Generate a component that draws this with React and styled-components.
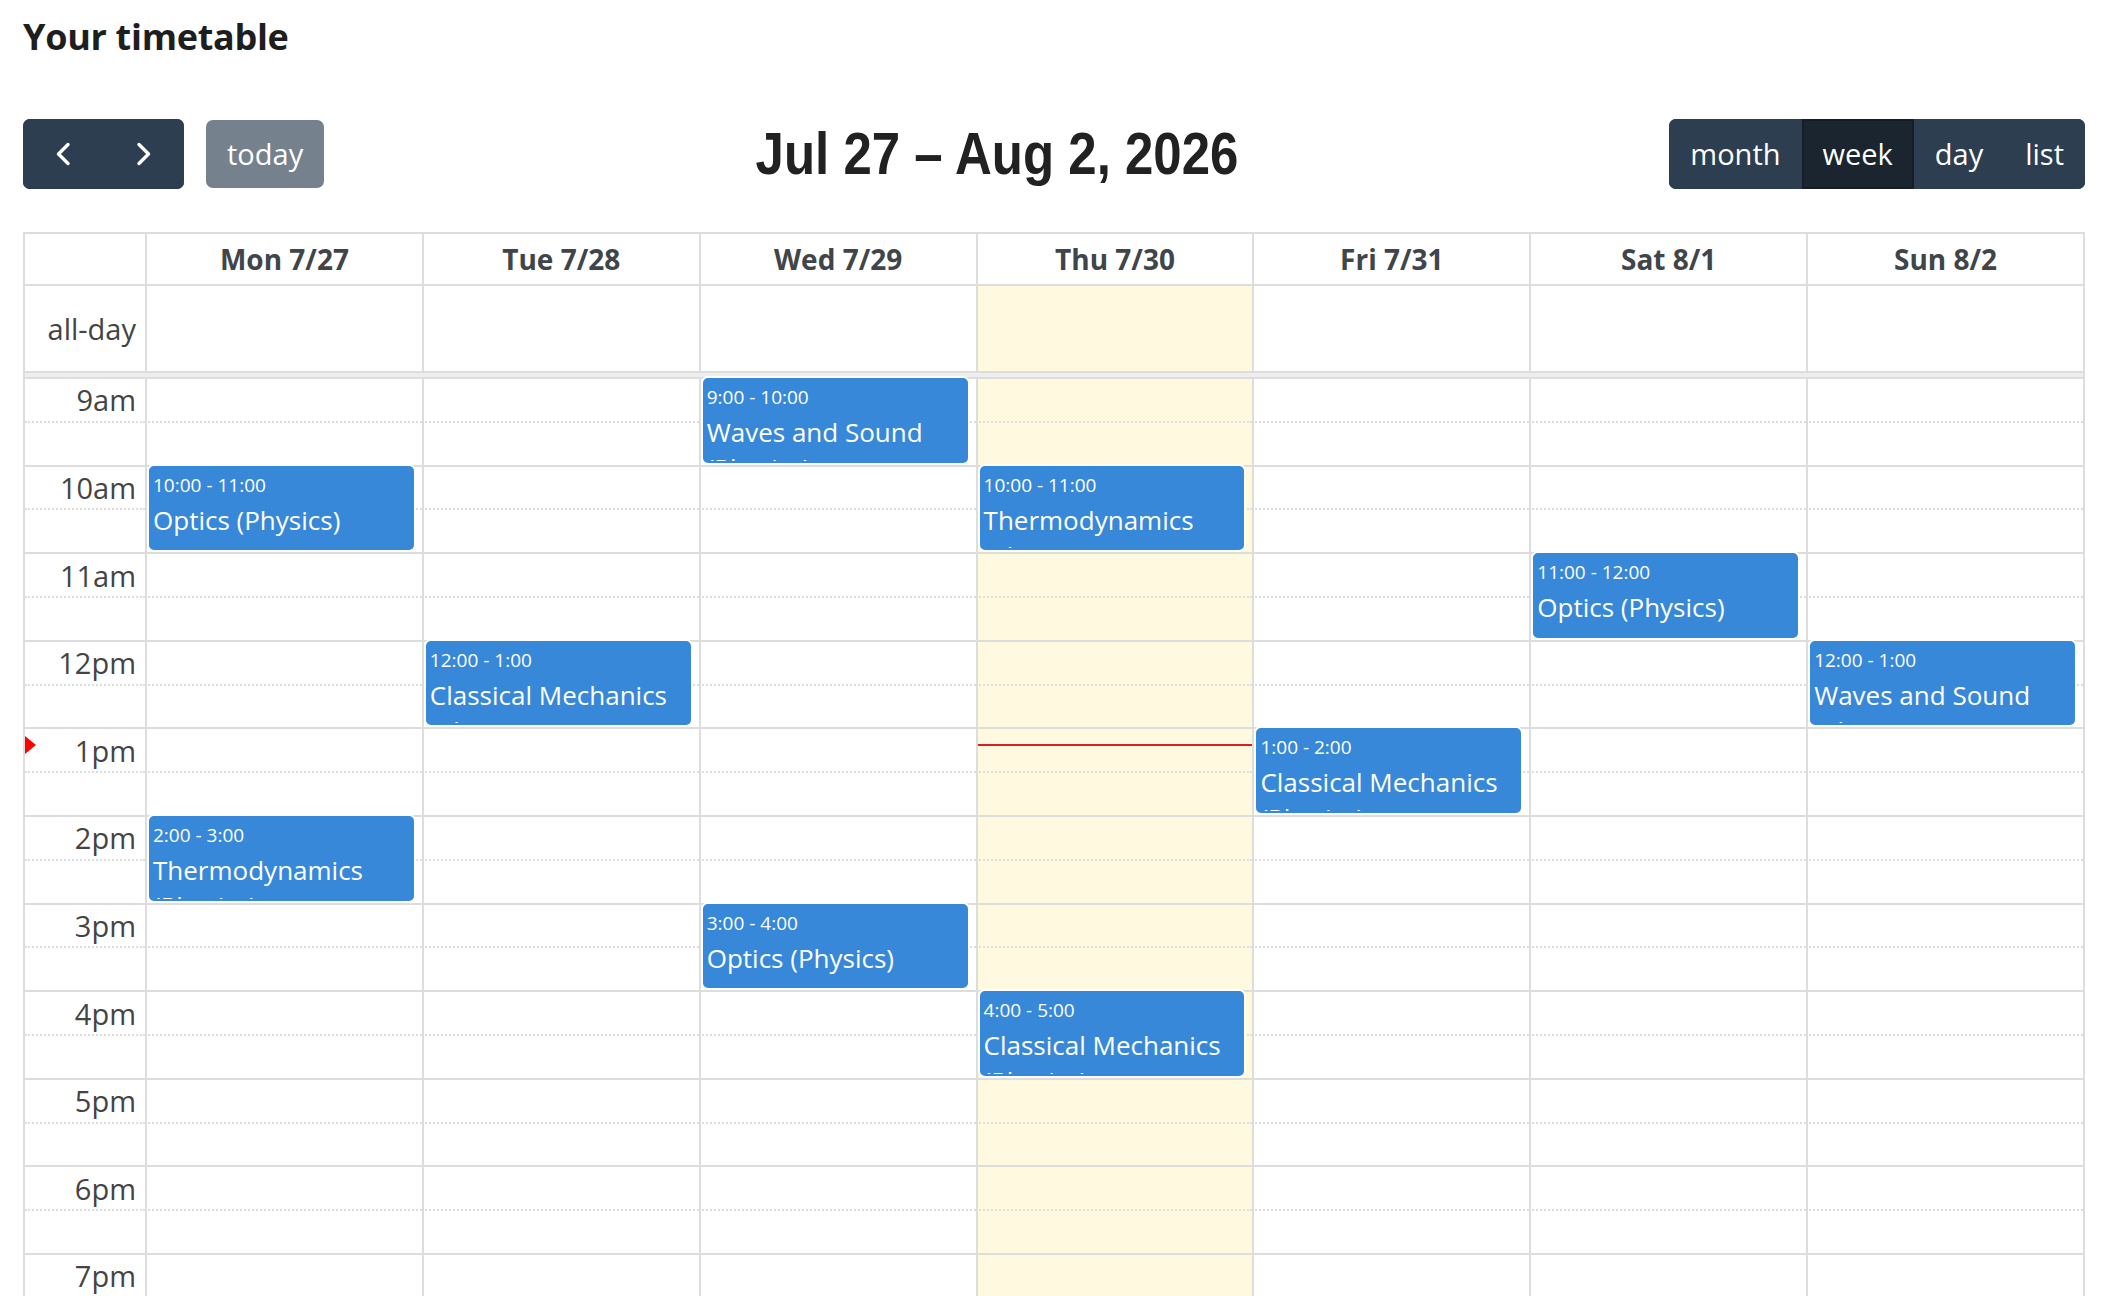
import React from "react"
import styled, { createGlobalStyle, css } from "styled-components"

const days = ["Mon 7/27", "Tue 7/28", "Wed 7/29", "Thu 7/30", "Fri 7/31", "Sat 8/1", "Sun 8/2"]
const TODAY = 3
const FIRST_HOUR = 9
const SLOT_COUNT = 24

const events = [
  { day: 0, start: 10, time: "10:00 - 11:00", title: "Optics (Physics)" },
  { day: 0, start: 14, time: "2:00 - 3:00", title: "Thermodynamics (Physics)" },
  { day: 1, start: 12, time: "12:00 - 1:00", title: "Classical Mechanics (Physics)" },
  { day: 2, start: 9, time: "9:00 - 10:00", title: "Waves and Sound (Physics)" },
  { day: 2, start: 15, time: "3:00 - 4:00", title: "Optics (Physics)" },
  { day: 3, start: 10, time: "10:00 - 11:00", title: "Thermodynamics (Physics)" },
  { day: 3, start: 16, time: "4:00 - 5:00", title: "Classical Mechanics (Physics)" },
  { day: 4, start: 13, time: "1:00 - 2:00", title: "Classical Mechanics (Physics)" },
  { day: 5, start: 11, time: "11:00 - 12:00", title: "Optics (Physics)" },
  { day: 6, start: 12, time: "12:00 - 1:00", title: "Waves and Sound (Physics)" },
]

const hourLabel = (h) => {
  const suffix = h < 12 ? "am" : "pm"
  const n = h % 12 === 0 ? 12 : h % 12
  return `${n}${suffix}`
}

const rowOf = (hour) => (hour - FIRST_HOUR) * 2 + 1

const Chevron = ({ dir }) => (
  <svg width="16" height="24" viewBox="0 0 16 24" fill="none">
    <polyline
      points={dir === "left" ? "13,2.5 3.5,12 13,21.5" : "3,2.5 12.5,12 3,21.5"}
      stroke="#fff"
      strokeWidth="3.4"
      strokeLinecap="round"
      strokeLinejoin="round"
    />
  </svg>
)

export default function App() {
  const slots = Array.from({ length: SLOT_COUNT }, (_, i) => i)
  return (
    <>
      <GlobalStyle />
      <Page>
        <Heading>Your timetable</Heading>
        <Toolbar>
          <Chunk>
            <ButtonGroup>
              <NavButton aria-label="prev"><Chevron dir="left" /></NavButton>
              <NavButton aria-label="next"><Chevron dir="right" /></NavButton>
            </ButtonGroup>
            <TodayButton disabled>today</TodayButton>
          </Chunk>
          <RangeTitle>Jul 27 – Aug 2, 2026</RangeTitle>
          <ButtonGroup>
            <Button>month</Button>
            <Button $active>week</Button>
            <Button>day</Button>
            <Button>list</Button>
          </ButtonGroup>
        </Toolbar>

        <Calendar>
          <HeaderRow>
            <HeadCell $first />
            {days.map((d) => (
              <HeadCell key={d}>{d}</HeadCell>
            ))}
          </HeaderRow>

          <AllDayRow>
            <AxisCell>all-day</AxisCell>
            {days.map((d, i) => (
              <AllDayCell key={d} $today={i === TODAY} />
            ))}
          </AllDayRow>

          <Divider />

          <TimeGrid>
            {slots.map((s) => (
              <React.Fragment key={s}>
                <LabelCell $row={s + 1} $minor={s % 2 === 1}>
                  {s % 2 === 0 ? hourLabel(FIRST_HOUR + s / 2) : ""}
                </LabelCell>
                {days.map((d, i) => (
                  <SlotCell
                    key={d}
                    $row={s + 1}
                    $col={i + 2}
                    $minor={s % 2 === 1}
                    $today={i === TODAY}
                  />
                ))}
              </React.Fragment>
            ))}

            {events.map((e) => (
              <EventCard key={`${e.day}-${e.start}`} $col={e.day + 2} $row={rowOf(e.start)}>
                <EventTime>{e.time}</EventTime>
                <EventTitle>{e.title}</EventTitle>
              </EventCard>
            ))}

            <NowArrow $row={rowOf(13)} />
            <NowLine $row={rowOf(13)} $col={TODAY + 2} />
          </TimeGrid>
        </Calendar>
      </Page>
    </>
  )
}

const GlobalStyle = createGlobalStyle`
  html, body {
    margin: 0;
    padding: 0;
    background: #ffffff;
  }
  body {
    font-family: "Open Sans", "Liberation Sans", sans-serif;
    color: #212529;
  }
  *, *::before, *::after {
    box-sizing: border-box;
  }
`

const Page = styled.div`
  padding: 15px 35px 0 23px;
`

const Heading = styled.h1`
  margin: 0;
  font-size: 36px;
  line-height: 43px;
  font-weight: 700;
  color: #1e1e1e;
  letter-spacing: -0.3px;
`

const Toolbar = styled.div`
  display: flex;
  justify-content: space-between;
  align-items: center;
  height: 70px;
  margin: 61px 0 43px;
`

const Chunk = styled.div`
  display: flex;
  align-items: center;
  gap: 22px;
`

const ButtonGroup = styled.div`
  display: inline-flex;
  border-radius: 7px;
  overflow: hidden;
`

const Button = styled.button`
  display: flex;
  align-items: center;
  justify-content: center;
  height: 70px;
  padding: 0 19px;
  margin: 0;
  border: 2px solid ${(p) => (p.$active ? "#151e27" : "#2c3e50")};
  background: ${(p) => (p.$active ? "#1a252f" : "#2c3e50")};
  color: #ffffff;
  font-family: "Open Sans", "Liberation Sans", sans-serif;
  font-size: 29px;
  line-height: 1.5;
  cursor: pointer;
`

const NavButton = styled(Button)`
  width: 80.5px;
  padding: 0;
`

const TodayButton = styled(Button)`
  border-radius: 7px;
  opacity: 0.65;
  height: 68px;
  cursor: default;
`

const RangeTitle = styled.h2`
  margin: 0;
  font-family: "Liberation Sans", Arial, sans-serif;
  font-size: 60px;
  font-weight: 700;
  line-height: 1;
  color: #212121;
  white-space: nowrap;
  transform: scaleX(0.85);
`

const Calendar = styled.div`
  border: 2px solid #dddddd;
  border-bottom: none;
`

const columns = css`
  display: grid;
  grid-template-columns: 120px repeat(7, 1fr);
`

const HeaderRow = styled.div`
  ${columns};
  height: 50px;
`

const HeadCell = styled.div`
  display: flex;
  align-items: center;
  justify-content: center;
  border-left: ${(p) => (p.$first ? "none" : "2px solid #dddddd")};
  font-size: 28px;
  font-weight: 700;
  color: #40454a;
`

const AllDayRow = styled.div`
  ${columns};
  height: 87px;
  border-top: 2px solid #dddddd;
`

const AxisCell = styled.div`
  display: flex;
  align-items: center;
  justify-content: flex-end;
  padding-right: 9px;
  font-size: 29px;
  color: #444444;
`

const AllDayCell = styled.div`
  border-left: 2px solid #dddddd;
  background: ${(p) => (p.$today ? "#fffadf" : "transparent")};
`

const Divider = styled.div`
  height: 6px;
  border-top: 2px solid #dddddd;
  background: #eeeeee;
`

const TimeGrid = styled.div`
  ${columns};
  grid-auto-rows: 43.8px;
`

const slotBorder = css`
  border-top: 2px ${(p) => (p.$minor ? "dotted" : "solid")} #dddddd;
`

const LabelCell = styled.div`
  grid-column: 1;
  grid-row: ${(p) => p.$row};
  display: flex;
  align-items: center;
  justify-content: flex-end;
  padding-right: 9px;
  ${slotBorder};
  font-size: 29px;
  line-height: 1;
  color: #444444;
  white-space: nowrap;
`

const SlotCell = styled.div`
  grid-column: ${(p) => p.$col};
  grid-row: ${(p) => p.$row};
  ${slotBorder};
  border-left: 2px solid #dddddd;
  background: ${(p) => (p.$today ? "#fffadf" : "#ffffff")};
`

const EventCard = styled.div`
  grid-column: ${(p) => p.$col};
  grid-row: ${(p) => p.$row} / span 2;
  z-index: 2;
  min-height: 0;
  margin: 1px 8px 2px 4px;
  padding: 2px 2px 0;
  background: #3788d8;
  border: 2px solid #3788d8;
  border-radius: 5px;
  box-shadow: 0 0 0 2px #ffffff;
  color: #ffffff;
  overflow: hidden;
`

const EventTime = styled.div`
  font-size: 19px;
  line-height: 30px;
  margin-bottom: 2px;
  white-space: nowrap;
`

const EventTitle = styled.div`
  font-size: 26px;
  line-height: 36px;
`

const NowArrow = styled.div`
  grid-column: 1;
  grid-row: ${(p) => p.$row};
  justify-self: start;
  align-self: start;
  z-index: 3;
  width: 0;
  height: 0;
  margin-top: 9px;
  border-style: solid;
  border-width: 9px 0 9px 11px;
  border-color: transparent transparent transparent #ff0000;
`

const NowLine = styled.div`
  grid-column: ${(p) => p.$col};
  grid-row: ${(p) => p.$row};
  align-self: start;
  z-index: 3;
  height: 2px;
  margin: 17px 0 0 2px;
  background: #d81e1e;
`
